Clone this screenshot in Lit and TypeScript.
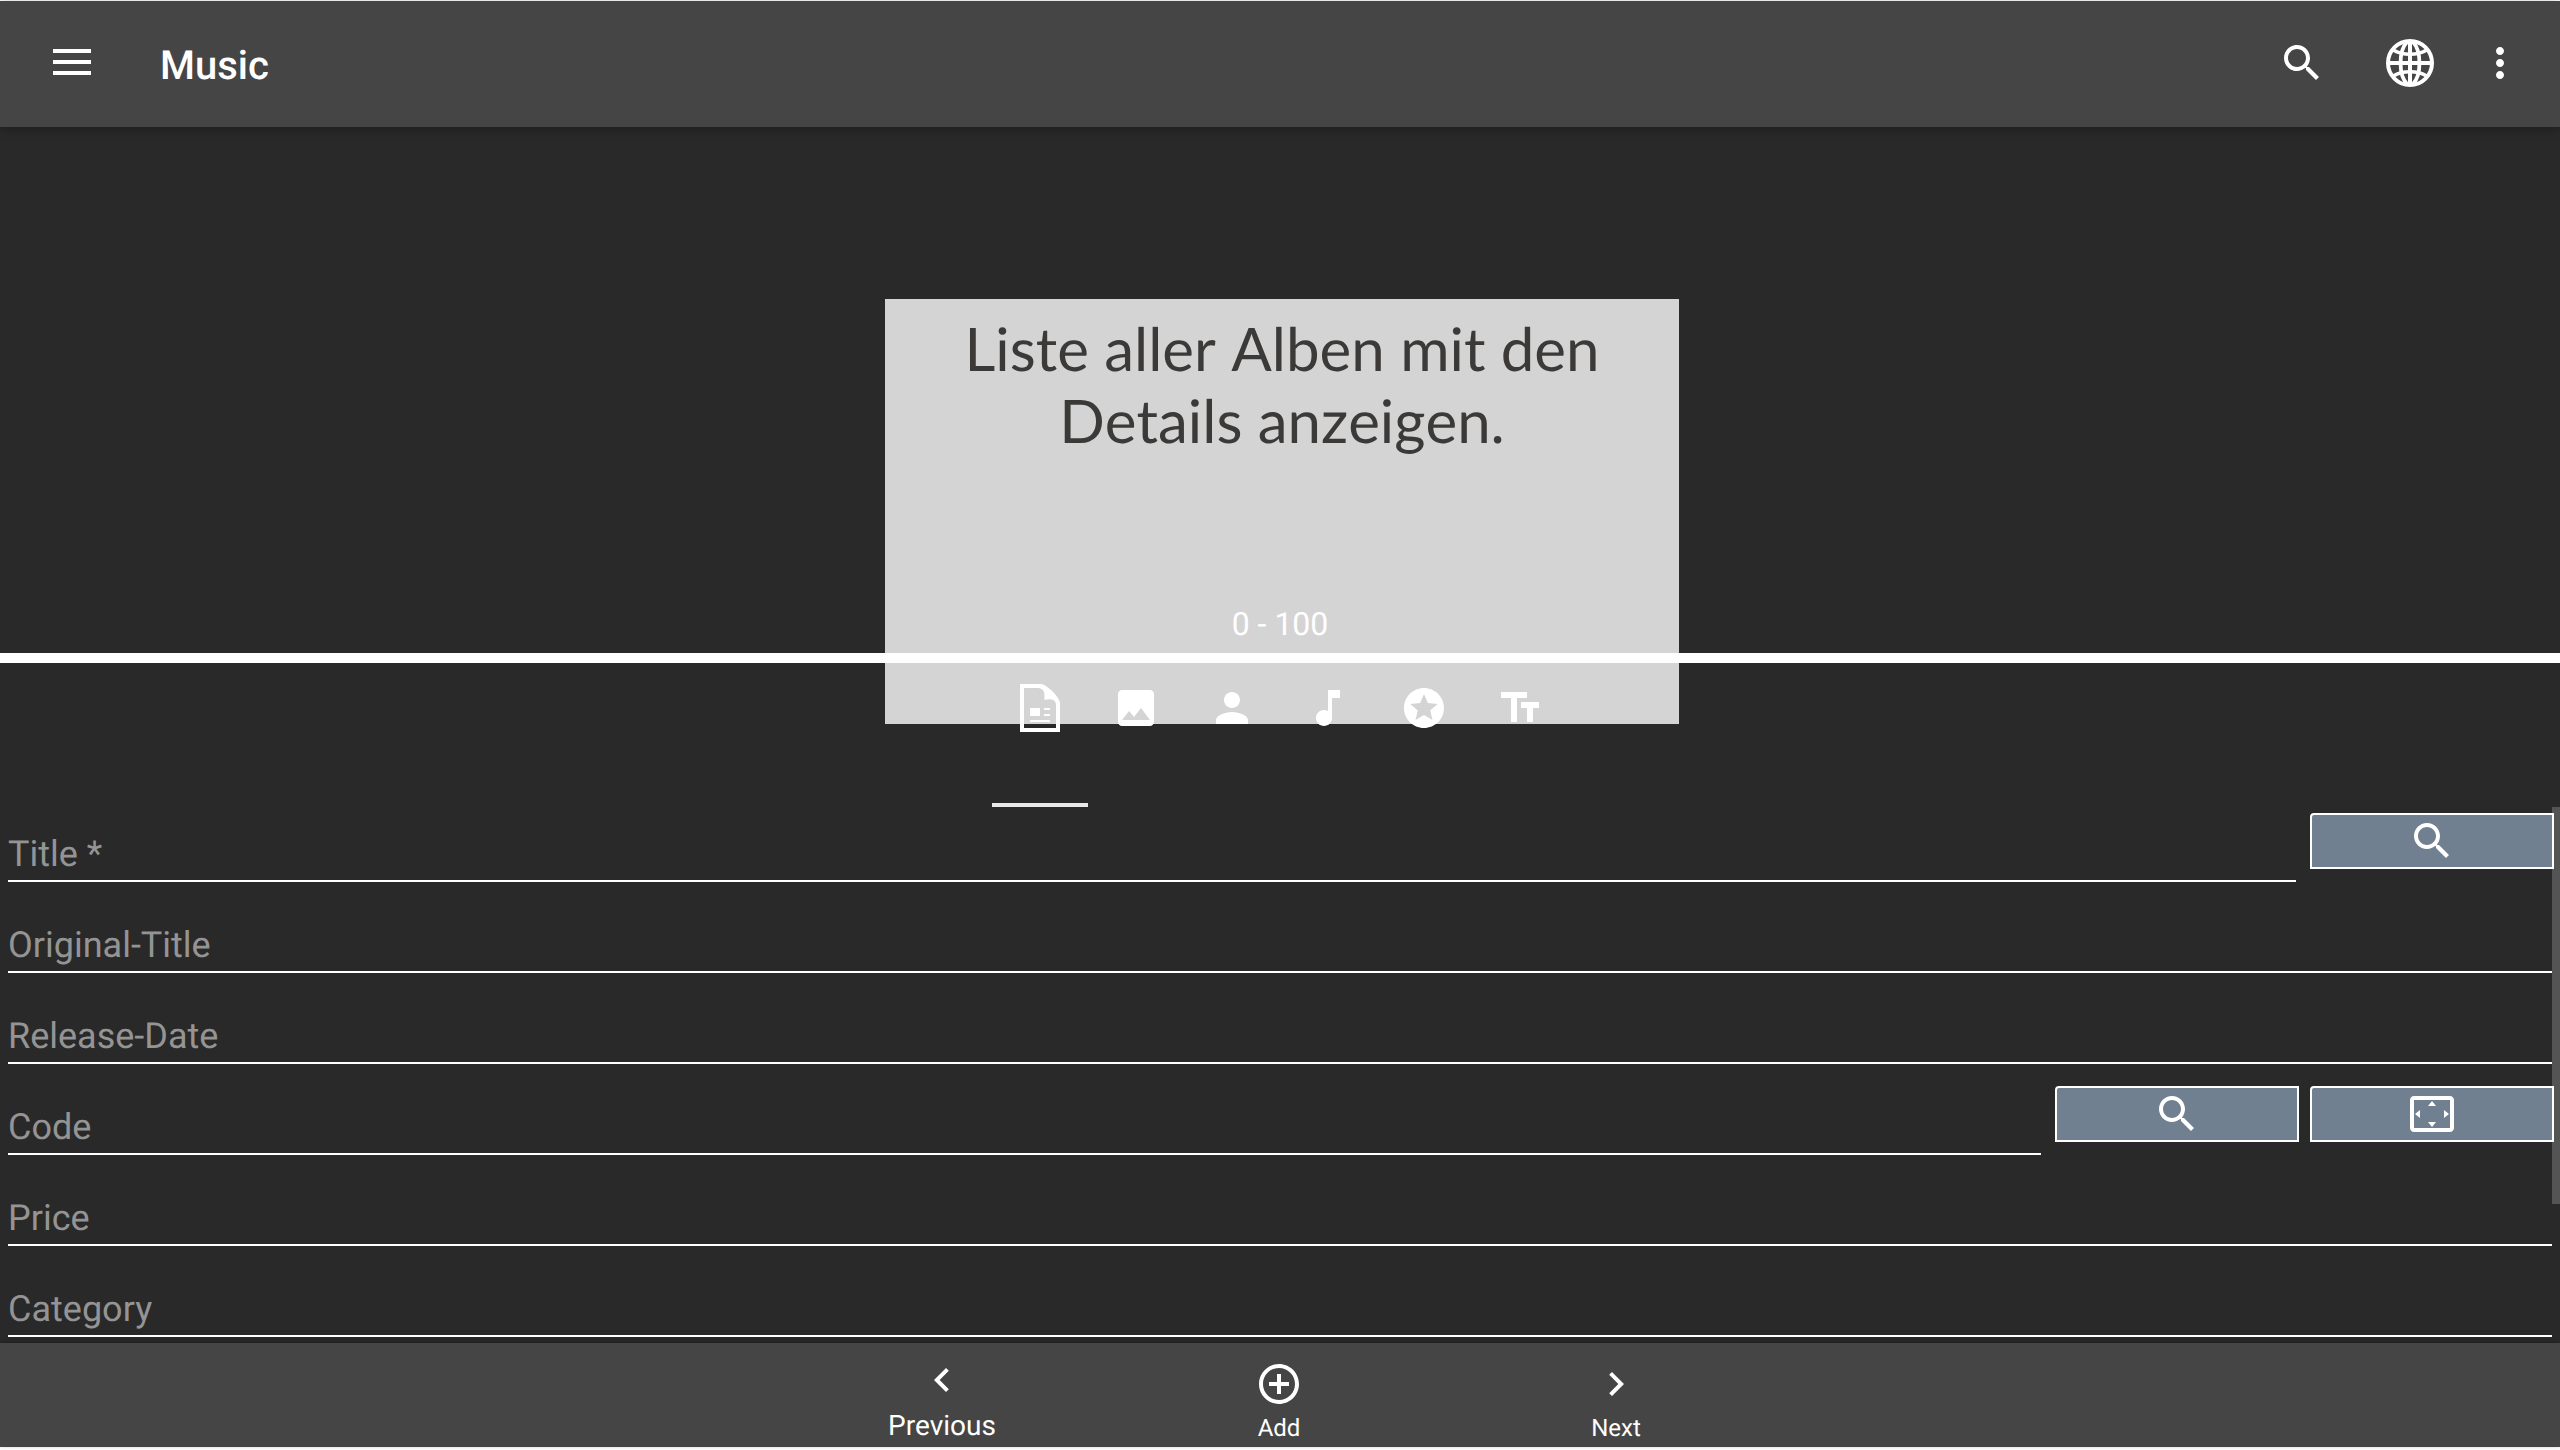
import { LitElement, html, css, svg, nothing } from "lit";
import type { SVGTemplateResult } from "lit";
import { customElement, state } from "lit/decorators.js";
import { classMap } from "lit/directives/class-map.js";

type IconName =
  | "menu" | "search" | "globe" | "more" | "article" | "image" | "person"
  | "note" | "stars" | "text" | "overscan" | "prev" | "add" | "next";

const ICONS: Record<IconName, SVGTemplateResult> = {
  menu: svg`<path d="M2.500 5h19v2h-19zM2.500 10.500h19v2h-19zM2.500 16h19v2h-19z"/>`,
  search: svg`<path d="M15.5 14h-.79l-.28-.27C15.41 12.59 16 11.11 16 9.5 16 5.91 13.09 3 9.5 3S3 5.91 3 9.5 5.91 16 9.5 16c1.61 0 3.09-.59 4.23-1.57l.27.28v.79l5 4.99L20.49 19l-4.99-5zm-6 0C7.01 14 5 11.99 5 9.5S7.01 5 9.5 5 14 7.01 14 9.5 11.99 14 9.5 14z"/>`,
  globe: svg`<g fill="none" stroke="currentColor" stroke-width="2"><circle cx="12" cy="12" r="11"/><path d="M12 1v22M1 12h22"/><path d="M10.5 1.5C6.2 6 6.2 18 10.5 22.5M13.5 1.5c4.300 4.500 4.300 16.500 0 21" stroke-width="1.900"/><path d="M3.600 5.500C8.300 8.300 15.700 8.300 20.400 5.500M3.600 18.500C8.300 15.700 15.700 15.700 20.400 18.500" stroke-width="1.800"/></g>`,
  more: svg`<path d="M12 8c1.100 0 2-.9 2-2s-.9-2-2-2-2 .9-2 2 .9 2 2 2zm0 2c-1.100 0-2 .9-2 2s.9 2 2 2 2-.9 2-2-.9-2-2-2zm0 6c-1.100 0-2 .9-2 2s.9 2 2 2 2-.9 2-2-.9-2-2-2z"/>`,
  article: svg`<path fill-rule="evenodd" d="M2 0h10.500C15 0 22 6.500 22 9.500V24H2zM4 2v20h16V10.500C20 8.300 18.500 7.600 16.700 7.600L14.200 7.900V5.500C14.200 3.300 13 2 10.500 2z"/><path d="M7 12h5v4H7zM14 12h3v1h-3zM14 15h3v1h-3zM7 18h10v1H7z"/>`,
  image: svg`<path d="M21 19V5c0-1.100-.9-2-2-2H5c-1.100 0-2 .9-2 2v14c0 1.100.9 2 2 2h14c1.100 0 2-.9 2-2zM8.500 13.500l2.500 3.010L14.500 12l4.500 6H5l3.500-4.500z"/>`,
  person: svg`<path d="M12 12c2.210 0 4-1.790 4-4s-1.790-4-4-4-4 1.790-4 4 1.790 4 4 4zm0 2c-2.670 0-8 1.340-8 4v2h16v-2c0-2.660-5.330-4-8-4z"/>`,
  note: svg`<path d="M12 3v10.550c-.59-.34-1.270-.55-2-.55-2.210 0-4 1.790-4 4s1.790 4 4 4 4-1.790 4-4V7h4V3h-6z"/>`,
  stars: svg`<path d="M11.990 2C6.470 2 2 6.480 2 12s4.470 10 9.990 10C17.520 22 22 17.520 22 12S17.520 2 11.990 2zm4.240 16L12 15.450 7.770 18l1.120-4.810-3.730-3.230 4.920-.42L12 5l1.920 4.530 4.920.42-3.730 3.230L16.230 18z"/>`,
  text: svg`<path d="M2.500 4v3h5v12h3V7h5V4h-13zm19 5h-9v3h3v7h3v-7h3V9z"/>`,
  overscan: svg`<path d="M12.010 5.500L10 8h4l-1.990-2.500zM18 10v4l2.500-1.990L18 10zM6 10l-2.500 2.010L6 14v-4zm8 6h-4l2.010 2.500L14 16zm7-13H3c-1.100 0-2 .9-2 2v14c0 1.100.9 2 2 2h18c1.100 0 2-.9 2-2V5c0-1.100-.9-2-2-2zm0 16.010H3V4.990h18v14.020z"/>`,
  prev: svg`<path d="M15.410 7.410L14 6l-6 6 6 6 1.410-1.410L10.830 12z"/>`,
  add: svg`<path d="M13 7h-2v4H7v2h4v4h2v-4h4v-2h-4V7zm-1-5C6.480 2 2 6.480 2 12s4.480 10 10 10 10-4.480 10-10S17.520 2 12 2zm0 18c-4.410 0-8-3.590-8-8s3.590-8 8-8 8 3.590 8 8-3.590 8-8 8z"/>`,
  next: svg`<path d="M10 6L8.590 7.410 13.170 12l-4.580 4.590L10 18l6-6z"/>`,
};

const icon = (name: IconName) =>
  html`<svg class="icon" viewBox="0 0 24 24" aria-hidden="true">${ICONS[name]}</svg>`;

interface Action { icon: IconName; label: string }
interface Field { id: string; label: string; required?: boolean; actions?: Action[] }

const FIELDS: Field[] = [
  { id: "title", label: "Title", required: true, actions: [{ icon: "search", label: "Search title" }] },
  { id: "original-title", label: "Original-Title" },
  { id: "release-date", label: "Release-Date" },
  {
    id: "code",
    label: "Code",
    actions: [
      { icon: "search", label: "Search code" },
      { icon: "overscan", label: "Scan code" },
    ],
  },
  { id: "price", label: "Price" },
  { id: "category", label: "Category" },
];

const TABS: Action[] = [
  { icon: "article", label: "Details" },
  { icon: "image", label: "Images" },
  { icon: "person", label: "Persons" },
  { icon: "note", label: "Tracks" },
  { icon: "stars", label: "Rating" },
  { icon: "text", label: "Text" },
];

const NAV: Action[] = [
  { icon: "prev", label: "Previous" },
  { icon: "add", label: "Add" },
  { icon: "next", label: "Next" },
];

@customElement("app-root")
export class AppRoot extends LitElement {
  static styles = css`
    :host {
      display: block;
      --bar: #454545;
      --page: #292929;
      font-family: Roboto, "Liberation Sans", sans-serif;
      text-rendering: geometricPrecision;
      color: #fff;
    }
    * { box-sizing: border-box; }
    button {
      margin: 0;
      padding: 0;
      border: 0;
      background: none;
      color: inherit;
      font: inherit;
      text-rendering: inherit;
      cursor: pointer;
    }
    .icon {
      display: block;
      flex: none;
      width: 48px;
      height: 48px;
      fill: currentColor;
    }
    .page {
      position: relative;
      isolation: isolate;
      display: flex;
      flex-direction: column;
      height: 100vh;
      background: var(--page);
      border-top: 1px solid #fff;
      border-bottom: 3px solid #fff;
    }
    .toolbar {
      display: flex;
      align-items: center;
      flex: none;
      height: 126px;
      padding: 0 36px 2px 48px;
      background: var(--bar);
      box-shadow: 0 2px 10px rgba(0, 0, 0, 0.3);
    }
    .heading {
      flex: 1;
      margin: 0;
      padding: 6px 0 0 64px;
      font-size: 40px;
      line-height: 48px;
      font-weight: 500;
    }
    .tools { display: flex; }
    .tools button:nth-child(2) { margin: 0 42px 0 60px; }
    .overview {
      flex: 526 1 0;
      min-height: 0;
      display: flex;
      flex-direction: column;
      justify-content: flex-end;
      align-items: center;
    }
    .range {
      z-index: 1;
      margin: 0 0 10px;
      font-size: 32px;
      line-height: 38px;
    }
    .hint {
      position: absolute;
      top: 298px;
      left: calc(50% - 395px);
      width: 794px;
      height: 425px;
      padding: 13px 60px;
      background: #d4d4d4;
      color: #3b3a38;
      font-family: Lato, Carlito, sans-serif;
      font-size: 60px;
      font-kerning: none;
      line-height: 72px;
      text-align: center;
    }
    .splitter {
      z-index: 1;
      flex: none;
      width: 100%;
      height: 10px;
      margin: 0;
      border: 0;
      background: #fff;
    }
    .details {
      z-index: 1;
      flex: 680 1 0;
      min-height: 0;
      display: flex;
      flex-direction: column;
    }
    .tabs {
      display: flex;
      flex: none;
      justify-content: center;
    }
    .tab {
      display: flex;
      justify-content: center;
      width: 96px;
      height: 144px;
      padding-top: 21px;
      border-bottom: 4px solid transparent;
    }
    .tab.active { border-color: #e8e8e8; }
    .form-area {
      position: relative;
      flex: 1;
      min-height: 0;
      display: flex;
    }
    .thumb {
      position: absolute;
      top: 0;
      right: 0;
      width: 8px;
      height: 74%;
      background: #545454;
    }
    .form {
      z-index: 1;
      flex: 1;
      overflow: auto;
      scrollbar-width: none;
    }
    .row {
      display: flex;
      align-items: flex-start;
      gap: 14px;
      padding: 0 8px 16px;
    }
    .row.with-actions { padding-right: 6px; }
    .field {
      flex: 1;
      display: grid;
      height: 75px;
      border-bottom: 2px solid #fff;
    }
    .field label,
    .field input {
      grid-area: 1 / 1;
      align-self: end;
      margin-bottom: 5px;
      font-size: 36px;
      line-height: 42px;
    }
    .field label {
      color: #949494;
      pointer-events: none;
    }
    .field input {
      width: 100%;
      height: 42px;
      padding: 0;
      border: 0;
      outline: 0;
      background: none;
      color: #fff;
      font-family: inherit;
    }
    .field input:not(:placeholder-shown) + label { visibility: hidden; }
    .actions {
      display: flex;
      gap: 11px;
      padding-top: 6px;
    }
    .action {
      display: flex;
      align-items: center;
      justify-content: center;
      width: 244px;
      height: 56px;
      border: 2px solid #fff;
      border-top-left-radius: 4px;
      background: #708090;
    }
    .nav {
      z-index: 1;
      display: flex;
      flex: none;
      justify-content: center;
      height: 104px;
      padding-right: 2px;
      background: var(--bar);
      box-shadow: 0 -1px 4px rgba(0, 0, 0, 0.3);
    }
    .nav-item {
      display: flex;
      flex-direction: column;
      align-items: center;
      justify-content: flex-end;
      gap: 6px;
      width: 337px;
      padding-bottom: 5px;
      font-size: 24px;
      line-height: 28px;
    }
    .nav-item.active {
      font-size: 28px;
      line-height: 32px;
    }
  `;

  @state() private tab = 0;
  @state() private nav = 0;

  private renderField(f: Field) {
    return html`
      <div class=${classMap({ row: true, "with-actions": !!f.actions })}>
        <div class="field">
          <input id=${f.id} type="text" placeholder=" " ?required=${f.required} />
          <label for=${f.id}>${f.label}${f.required ? " *" : ""}</label>
        </div>
        ${f.actions
          ? html`<div class="actions">
              ${f.actions.map(
                (a) => html`<button class="action" type="button" aria-label=${a.label}>${icon(a.icon)}</button>`
              )}
            </div>`
          : nothing}
      </div>
    `;
  }

  render() {
    return html`
      <div class="page">
        <header class="toolbar">
          <button type="button" aria-label="Menu">${icon("menu")}</button>
          <h1 class="heading">Music</h1>
          <div class="tools">
            <button type="button" aria-label="Search">${icon("search")}</button>
            <button type="button" aria-label="Language">${icon("globe")}</button>
            <button type="button" aria-label="More">${icon("more")}</button>
          </div>
        </header>
        <section class="overview">
          <div class="hint" role="tooltip">Liste aller Alben mit den Details anzeigen.</div>
          <p class="range">0 - 100</p>
        </section>
        <hr class="splitter" />
        <section class="details">
          <div class="tabs" role="tablist">
            ${TABS.map(
              (t, i) => html`<button
                class=${classMap({ tab: true, active: i === this.tab })}
                type="button"
                role="tab"
                aria-label=${t.label}
                aria-selected=${i === this.tab ? "true" : "false"}
                @click=${() => (this.tab = i)}
              >${icon(t.icon)}</button>`
            )}
          </div>
          <div class="form-area">
            <form class="form">${FIELDS.map((f) => this.renderField(f))}</form>
            <div class="thumb"></div>
          </div>
        </section>
        <nav class="nav">
          ${NAV.map(
            (n, i) => html`<button
              class=${classMap({ "nav-item": true, active: i === this.nav })}
              type="button"
              @click=${() => (this.nav = i)}
            >${icon(n.icon)}<span>${n.label}</span></button>`
          )}
        </nav>
      </div>
    `;
  }
}
